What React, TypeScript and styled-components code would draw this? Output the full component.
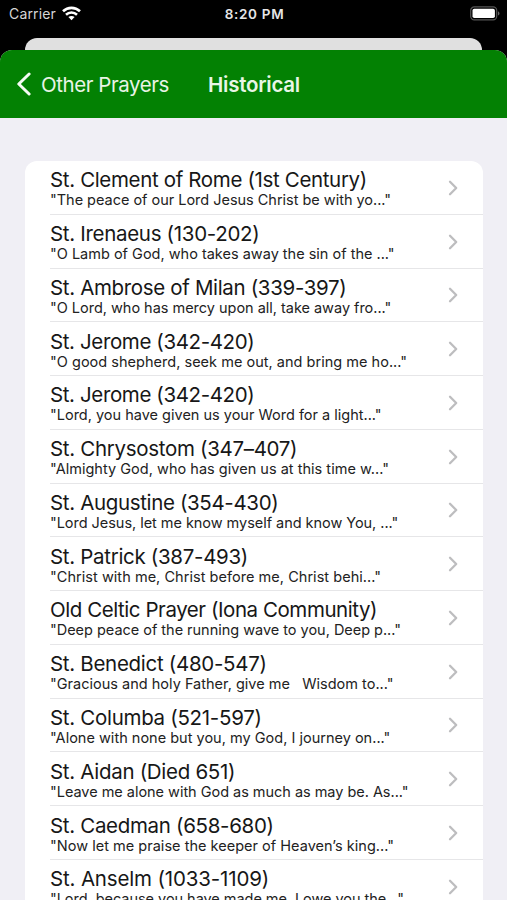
import React from 'react';
import styled, { createGlobalStyle } from 'styled-components';

const GlobalStyle = createGlobalStyle`
  * { box-sizing: border-box; }
  body { margin: 0; background: #000; overflow: hidden; }
`;

const Screen = styled.div`
  width: 507px;
  height: 900px;
  overflow: hidden;
  background: #000;
  font-family: Inter, 'Liberation Sans', sans-serif;
  font-kerning: normal;
`;

const StatusBar = styled.header`
  display: grid;
  grid-template-columns: 1fr auto 1fr;
  align-items: center;
  height: 38px;
  padding: 0 7px 11px 9px;
`;

const Carrier = styled.div`
  display: flex;
  align-items: center;
  gap: 6px;
  color: #d6d6d6;
  font-size: 14px;
  letter-spacing: 0.15px;
`;

const Clock = styled.time`
  color: #e6e6e6;
  font-size: 13.5px;
  font-weight: 600;
  letter-spacing: 0.7px;
`;

const BatteryIcon = styled.svg`
  justify-self: end;
  margin-bottom: 1px;
`;

const SheetBehind = styled.div`
  height: 24px;
  margin: 0 25px -12px;
  border-radius: 12px 12px 0 0;
  background: #e0e0e0;
`;

const Sheet = styled.main`
  position: relative;
  height: 850px;
  overflow: hidden;
  border-radius: 12px 12px 0 0;
  background: #f0eff5;
`;

const NavBar = styled.nav`
  display: flex;
  align-items: center;
  height: 68px;
  padding-left: 16px;
  background: #038103;
`;

const BackButton = styled.button`
  display: flex;
  align-items: center;
  gap: 9px;
  width: 192px;
  padding: 0;
  border: 0;
  background: none;
  color: #e9f4e6;
  font: inherit;
  font-size: 20.5px;
  letter-spacing: -0.43px;
  white-space: nowrap;
`;

const NavTitle = styled.h1`
  margin: 0;
  color: #e9f6e6;
  font-size: 20.5px;
  font-weight: 600;
  letter-spacing: -0.25px;
`;

const List = styled.ul`
  margin: 43px 24px 0 25px;
  padding: 0;
  list-style: none;
  border-radius: 12px 12px 0 0;
  background: #fff;
`;

const Row = styled.li`
  display: flex;
  align-items: center;
  height: 53.77px;
  margin-left: 25px;
  padding: 0.9px 25px 0 0;
  border-bottom: 1px solid #e6e6e8;
`;

const RowText = styled.div`
  flex: 1;
  min-width: 0;
  white-space: pre;
`;

const Title = styled.div<{ $track: number }>`
  color: #171717;
  font-size: 20.5px;
  line-height: 25px;
  letter-spacing: ${(p) => p.$track}px;
`;

const Excerpt = styled.div<{ $track: number }>`
  color: #222;
  font-size: 14.5px;
  line-height: 16px;
  letter-spacing: ${(p) => p.$track}px;
`;

type Prayer = { title: string; text: string; titleTrack: number; textTrack: number };

const prayers: Prayer[] = [
  { title: 'St. Clement of Rome (1st Century)', text: 'The peace of our Lord Jesus Christ be with yo...', titleTrack: -0.35, textTrack: -0.02 },
  { title: 'St. Irenaeus (130-202)', text: 'O Lamb of God, who takes away the sin of the ...', titleTrack: -0.31, textTrack: 0 },
  { title: 'St. Ambrose of Milan (339-397)', text: 'O Lord, who has mercy upon all, take away fro...', titleTrack: -0.34, textTrack: -0.02 },
  { title: 'St. Jerome (342-420)', text: 'O good shepherd, seek me out, and bring me ho...', titleTrack: -0.38, textTrack: 0.02 },
  { title: 'St. Jerome (342-420)', text: 'Lord, you have given us your Word for a light...', titleTrack: -0.38, textTrack: 0 },
  { title: 'St. Chrysostom (347–407)', text: 'Almighty God, who has given us at this time w...', titleTrack: -0.31, textTrack: 0.02 },
  { title: 'St. Augustine (354-430)', text: 'Lord Jesus, let me know myself and know You, ...', titleTrack: -0.35, textTrack: -0.04 },
  { title: 'St. Patrick (387-493)', text: 'Christ with me, Christ before me, Christ behi...', titleTrack: -0.31, textTrack: 0.04 },
  { title: 'Old Celtic Prayer (Iona Community)', text: 'Deep peace of the running wave to you, Deep p...', titleTrack: -0.44, textTrack: -0.02 },
  { title: 'St. Benedict (480-547)', text: 'Gracious and holy Father, give me   Wisdom to...', titleTrack: -0.3, textTrack: 0.01 },
  { title: 'St. Columba (521-597)', text: 'Alone with none but you, my God, I journey on...', titleTrack: -0.3, textTrack: 0.01 },
  { title: 'St. Aidan (Died 651)', text: 'Leave me alone with God as much as may be. As...', titleTrack: -0.3, textTrack: -0.03 },
  { title: 'St. Caedman (658-680)', text: 'Now let me praise the keeper of Heaven’s king...', titleTrack: -0.32, textTrack: 0.02 },
  { title: 'St. Anselm (1033-1109)', text: 'Lord, because you have made me, I owe you the...', titleTrack: -0.16, textTrack: -0.04 },
];

const Wifi = () => (
  <svg width="19" height="15" viewBox="0 0 19 15" fill="none" stroke="#fff" strokeWidth="2.6">
    <path d="M1 5.3C5.8.7 13.2.7 18 5.3" />
    <path d="M4 8.7c3.1-2.9 7.9-2.9 11 0" />
    <path d="M6.4 11.1c1.8-1.6 4.4-1.6 6.2 0L9.5 14.2Z" fill="#fff" stroke="none" />
  </svg>
);

const Battery = () => (
  <BatteryIcon width="30" height="15" viewBox="0 0 30 15">
    <rect x="0.7" y="0.9" width="26" height="13" rx="3.6" fill="#000" stroke="#555" strokeWidth="1.2" />
    <rect x="2.5" y="2.7" width="22.4" height="9.4" rx="1.8" fill="#fff" />
    <path d="M28 5.2c2 .8 2 3.6 0 4.4Z" fill="#666" />
  </BatteryIcon>
);

const BackChevron = () => (
  <svg width="16" height="24" viewBox="0 0 16 24" fill="none" stroke="#f5fbf4" strokeWidth="3" strokeLinecap="round" strokeLinejoin="round">
    <path d="M13.1 2 2.8 12l10.3 10" />
  </svg>
);

const RowChevron = () => (
  <svg width="10" height="16" viewBox="0 0 10 16" fill="none" stroke="#bdbdbf" strokeWidth="2.3" strokeLinecap="round" strokeLinejoin="round">
    <path d="m2 1.8 6.2 6.2L2 14.2" />
  </svg>
);

export default function App() {
  return (
    <Screen>
      <GlobalStyle />
      <StatusBar>
        <Carrier>
          Carrier
          <Wifi />
        </Carrier>
        <Clock>8:20 PM</Clock>
        <Battery />
      </StatusBar>
      <SheetBehind />
      <Sheet>
        <NavBar>
          <BackButton>
            <BackChevron />
            Other Prayers
          </BackButton>
          <NavTitle>Historical</NavTitle>
        </NavBar>
        <List>
          {prayers.map((p, i) => (
            <Row key={i}>
              <RowText>
                <Title $track={p.titleTrack}>{p.title}</Title>
                <Excerpt $track={p.textTrack}>{`"${p.text}"`}</Excerpt>
              </RowText>
              <RowChevron />
            </Row>
          ))}
        </List>
      </Sheet>
    </Screen>
  );
}
